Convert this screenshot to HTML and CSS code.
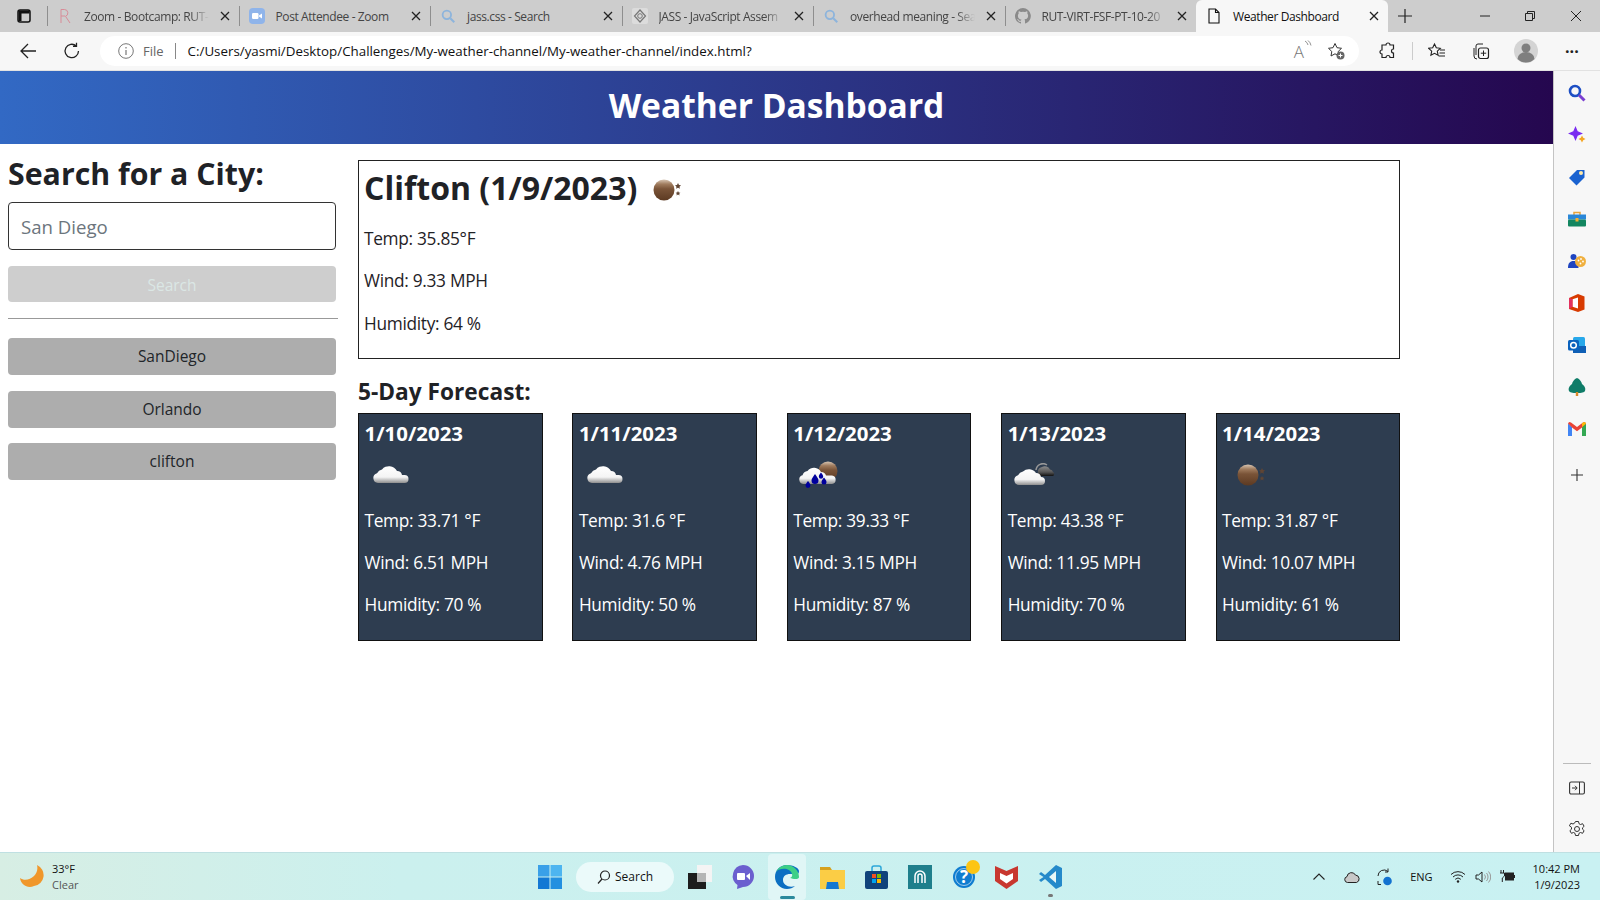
FILE: index.html
```html
<!DOCTYPE html>
<html lang="en">
<head>
    <meta charset="UTF-8">
    <meta name="viewport" content="width=device-width, initial-scale=1.0">
    <title>Weather Dashboard</title>
    <link rel="stylesheet" href="styles.css">
</head>
<body>
<svg class="defs" width="0" height="0">
    <defs>
        <linearGradient id="moonFill" x1="0" y1="0" x2="0" y2="1">
            <stop offset="0" stop-color="#d8c6b4"/>
            <stop offset="0.22" stop-color="#a07c5e"/>
            <stop offset="0.45" stop-color="#7a5438"/>
            <stop offset="1" stop-color="#5c3a22"/>
        </linearGradient>
        <linearGradient id="cloudFill" x1="0" y1="0" x2="0" y2="1">
            <stop offset="0" stop-color="#ffffff"/>
            <stop offset="0.65" stop-color="#f4f4f4"/>
            <stop offset="1" stop-color="#8e8e8e"/>
        </linearGradient>
        <linearGradient id="darkCloud" x1="0" y1="0" x2="0" y2="1">
            <stop offset="0" stop-color="#8c8c8c"/>
            <stop offset="0.6" stop-color="#555"/>
            <stop offset="1" stop-color="#111"/>
        </linearGradient>
        <symbol id="close" viewBox="0 0 10 10">
            <path d="M1 1l8 8M9 1l-8 8" stroke="#222" stroke-width="1.3" fill="none"/>
        </symbol>
        <symbol id="mag" viewBox="0 0 14 14">
            <circle cx="6" cy="6" r="3.7" stroke="#8db4dc" stroke-width="1.6" fill="none"/>
            <path d="M9 9l3.5 3.5" stroke="#8db4dc" stroke-width="1.8"/>
        </symbol>
        <symbol id="moon" viewBox="0 0 30 24">
            <circle cx="11" cy="12" r="10.500" fill="url(#moonFill)"/>
            <path d="M25 5l1 2 2 .3-1.500 1.400.4 2-1.900-1-1.900 1 .4-2L22 7.300l2-.3zM25 13l.8 1.500 1.600.2-1.200 1.100.3 1.600-1.500-.8-1.500.8.3-1.600-1.200-1.100 1.600-.2z" fill="#5f4534"/>
        </symbol>
        <symbol id="cloud" viewBox="0 0 36 20">
            <path d="M5 20a5 5 0 0 1-1-9.800 7 7 0 0 1 5-3.700A9 9 0 0 1 24 8a5 5 0 0 1 5 4h2.500a4 4 0 0 1 0 8z" fill="url(#cloudFill)"/>
        </symbol>
    </defs>
</svg>

<div class="tabbar">
    <button class="tab-toggle">
        <svg width="16" height="16" viewBox="0 0 16 16"><rect x="2" y="2" width="12" height="12" rx="2" fill="none" stroke="#111" stroke-width="1.500"/><path d="M2.500 2.500h11v3h-11zM2.500 5h3v8h-3z" fill="#111"/></svg>
    </button>
    <div class="tab">
        <svg class="tab-icon" viewBox="0 0 16 16"><path d="M4 15V1.500h3.500a3.500 3.500 0 0 1 1 6.800L13 15M4 8h4" fill="none" stroke="#d88b97" stroke-width="1"/></svg>
        <span class="tab-title tab-fade">Zoom - Bootcamp: RUT-</span>
        <svg class="tab-close"><use href="#close"/></svg>
    </div>
    <div class="tab">
        <svg class="tab-icon" viewBox="0 0 16 16"><rect width="16" height="16" rx="4" fill="#8fb4ea"/><rect x="3" y="5" width="6.500" height="6" rx="1.200" fill="#fff"/><path d="M10 7.500l3-2v5l-3-2z" fill="#fff"/></svg>
        <span class="tab-title">Post Attendee - Zoom</span>
        <svg class="tab-close"><use href="#close"/></svg>
    </div>
    <div class="tab">
        <svg class="tab-icon"><use href="#mag"/></svg>
        <span class="tab-title">jass.css - Search</span>
        <svg class="tab-close"><use href="#close"/></svg>
    </div>
    <div class="tab">
        <svg class="tab-icon" viewBox="0 0 16 16"><rect width="16" height="16" rx="2" fill="#dcdcdc"/><path d="M8 2l5.500 6L8 14 2.500 8z" fill="none" stroke="#777" stroke-width="1.200"/><circle cx="8" cy="8" r="2.300" fill="none" stroke="#777"/></svg>
        <span class="tab-title tab-fade">JASS - JavaScript Assem</span>
        <svg class="tab-close"><use href="#close"/></svg>
    </div>
    <div class="tab">
        <svg class="tab-icon"><use href="#mag"/></svg>
        <span class="tab-title tab-fade">overhead meaning - Sea</span>
        <svg class="tab-close"><use href="#close"/></svg>
    </div>
    <div class="tab">
        <svg class="tab-icon" viewBox="0 0 16 16"><path d="M8 0a8 8 0 0 0-2.500 15.600c.4.100.5-.2.500-.4v-1.400c-2.200.5-2.700-1-2.700-1-.4-.9-.9-1.200-.9-1.200-.7-.5.100-.5.100-.5.800.1 1.200.8 1.200.8.700 1.200 1.900.9 2.300.7.100-.5.300-.9.500-1.100-1.800-.2-3.600-.9-3.600-4 0-.9.300-1.600.8-2.100-.1-.2-.4-1 .1-2.100 0 0 .7-.2 2.200.8a7.600 7.600 0 0 1 4 0c1.500-1 2.200-.8 2.200-.8.400 1.100.2 1.900.1 2.100.5.600.8 1.300.8 2.100 0 3.100-1.900 3.700-3.700 3.900.3.300.6.800.6 1.500v2.200c0 .2.100.5.600.4A8 8 0 0 0 8 0z" fill="#8a8a8a"/></svg>
        <span class="tab-title tab-fade">RUT-VIRT-FSF-PT-10-20</span>
        <svg class="tab-close"><use href="#close"/></svg>
    </div>
    <div class="tab tab-active">
        <svg class="tab-icon" viewBox="0 0 16 16"><path d="M3 1h6.500L13 4.500V15H3zM9.500 1v3.500H13" fill="none" stroke="#111" stroke-width="1.100"/></svg>
        <span class="tab-title">Weather Dashboard</span>
        <svg class="tab-close"><use href="#close"/></svg>
    </div>
    <div class="new-tab">
        <svg width="16" height="16" viewBox="0 0 16 16"><path d="M8 1v14M1 8h14" stroke="#222" stroke-width="1.200"/></svg>
    </div>
    <div class="window-controls">
        <svg width="10" height="10" viewBox="0 0 10 10"><path d="M0 5h10" stroke="#222"/></svg>
        <svg width="10" height="10" viewBox="0 0 10 10"><path d="M.5 2.500h7v7h-7zM2.500 2.500v-2h7v7h-2" fill="none" stroke="#222"/></svg>
        <svg width="10" height="10" viewBox="0 0 10 10"><path d="M0 0l10 10M10 0L0 10" stroke="#222"/></svg>
    </div>
</div>

<div class="toolbar">
    <div class="nav-btn">
        <svg width="18" height="18" viewBox="0 0 18 18"><path d="M17 9H2M9 2L2 9l7 7" fill="none" stroke="#222" stroke-width="1.300"/></svg>
    </div>
    <div class="nav-btn">
        <svg width="18" height="18" viewBox="0 0 18 18"><path d="M15.500 9a6.700 6.700 0 1 1-2.200-5M13.500 .8V4.300H10" fill="none" stroke="#222" stroke-width="1.300"/></svg>
    </div>
    <div class="address">
        <svg width="16" height="16" viewBox="0 0 16 16"><circle cx="8" cy="8" r="7.300" fill="none" stroke="#777"/><path d="M8 7v5M8 4v1.500" stroke="#777" stroke-width="1.200"/></svg>
        <span class="address-file">File</span>
        <span class="address-sep"></span>
        <span class="address-url">C:/Users/yasmi/Desktop/Challenges/My-weather-channel/My-weather-channel/index.html?</span>
        <span class="address-read">A<svg width="8" height="10" viewBox="0 0 8 10"><path d="M1 1a6 6 0 0 1 3 4M4 .5a8 8 0 0 1 3 5" fill="none" stroke="#777" stroke-width=".8"/></svg></span>
        <svg width="18" height="18" viewBox="0 0 18 18"><path d="M8 1.500l2 4.200 4.500.6-3.300 3.200.8 4.500L8 11.800 4 14l.8-4.500L1.500 6.300 6 5.700z" fill="none" stroke="#333"/><circle cx="13.500" cy="13.500" r="4" fill="#666"/><path d="M13.500 11.500v4M11.500 13.500h4" stroke="#fff"/></svg>
    </div>
    <div class="tool-icons">
        <svg width="18" height="18" viewBox="0 0 18 18"><path d="M7 3a2 2 0 0 1 4 0h3.500v4a2 2 0 0 0 0 4v4.500H11a2 2 0 0 0-4 0H3V12a2 2 0 0 1 0-4V3z" fill="none" stroke="#222" stroke-width="1.200"/></svg>
        <span class="tool-sep"></span>
        <svg width="18" height="18" viewBox="0 0 18 18"><path d="M6.500 2l1.800 3.800 4 .5-3 2.800.8 4.200-3.600-2-3.600 2 .8-4.200-3-2.800 4-.5zM12 8h5M11.500 11h5.500M10.500 14H17" fill="none" stroke="#222" stroke-width="1.100"/></svg>
        <svg class="tool-collections" width="18" height="18" viewBox="0 0 18 18"><path d="M4 13V4a2 2 0 0 1 2-2h5M2 6v8a3 3 0 0 0 3 3" fill="none" stroke="#222"/><rect x="6.500" y="6" width="10" height="10.500" rx="2" fill="none" stroke="#222" stroke-width="1.200"/><path d="M11.500 8.500v5.500M8.800 11.200h5.400" stroke="#222"/></svg>
        <svg class="avatar" width="24" height="24" viewBox="0 0 24 24"><circle cx="12" cy="12" r="12" fill="#d4d4d4"/><circle cx="12" cy="9" r="4.500" fill="#7f7f7f"/><path d="M3.500 20a8.500 7 0 0 1 17 0 12 12 0 0 1-17 0z" fill="#7f7f7f"/></svg>
        <span class="more">···</span>
    </div>
</div>

<div class="viewport">
    <div class="page">
        <header class="page-header">
            <h1>Weather Dashboard</h1>
        </header>
        <div class="page-body">
            <aside class="search-col">
                <h2>Search for a City:</h2>
                <input type="text" class="city-input" placeholder="San Diego">
                <button class="btn-search" disabled>Search</button>
                <hr class="divider">
                <div class="history">
                    <button class="btn-history">SanDiego</button>
                    <button class="btn-history">Orlando</button>
                    <button class="btn-history">clifton</button>
                </div>
            </aside>
            <main class="weather-col">
                <section class="current">
                    <h2 class="current-title">Clifton (1/9/2023) <svg class="current-icon"><use href="#moon"/></svg></h2>
                    <p>Temp: 35.85°F</p>
                    <p>Wind: 9.33 MPH</p>
                    <p>Humidity: 64 %</p>
                </section>
                <h3 class="forecast-title">5-Day Forecast:</h3>
                <div class="forecast">
                    <div class="card">
                        <h4>1/10/2023</h4>
                        <div class="card-icon">
                            <svg class="icon-cloud"><use href="#cloud"/></svg>
                        </div>
                        <p>Temp: 33.71 °F</p>
                        <p>Wind: 6.51 MPH</p>
                        <p>Humidity: 70 %</p>
                    </div>
                    <div class="card">
                        <h4>1/11/2023</h4>
                        <div class="card-icon">
                            <svg class="icon-cloud"><use href="#cloud"/></svg>
                        </div>
                        <p>Temp: 31.6 °F</p>
                        <p>Wind: 4.76 MPH</p>
                        <p>Humidity: 50 %</p>
                    </div>
                    <div class="card">
                        <h4>1/12/2023</h4>
                        <div class="card-icon">
                            <svg class="icon-rain" viewBox="0 0 40 29">
                                <circle cx="29" cy="10" r="9.500" fill="url(#moonFill)"/>
                                <path d="M5 23a4.500 4.500 0 0 1-1.500-8.800 6.500 6.500 0 0 1 5-4.200A8 8 0 0 1 22 11a5 5 0 0 1 5 3.500h6a4.300 4.300 0 0 1 0 8.500z" fill="url(#cloudFill)"/>
                                <path d="M16 13c2 3 3.500 4.500 3.500 6.500a3.500 3.500 0 0 1-7 0c0-2 1.500-3.500 3.500-6.500zM22 11.500c1 1.500 2.200 2.600 2.200 4a2.200 2.200 0 0 1-4.400 0c0-1.400 1.200-2.500 2.200-4zM9 20c1 1.500 2.500 2.800 2.500 4.500a2.500 2.500 0 0 1-5 0C6.500 22.800 8 21.500 9 20zM25 16.500c1 1.500 2.500 2.800 2.500 4.500a2.500 2.500 0 0 1-5 0c0-1.700 1.500-3 2.500-4.500z" fill="#00009c"/>
                            </svg>
                        </div>
                        <p>Temp: 39.33 °F</p>
                        <p>Wind: 3.15 MPH</p>
                        <p>Humidity: 87 %</p>
                    </div>
                    <div class="card">
                        <h4>1/13/2023</h4>
                        <div class="card-icon">
                            <svg class="icon-partly" viewBox="0 0 42 22">
                                <path d="M22 7a7 7 0 0 1 11-5" fill="none" stroke="#999" stroke-width="1.500"/>
                                <path d="M24 13V7a5 5 0 0 1 4-3 6 6 0 0 1 8 2.500 3.300 3.300 0 0 1 3 2.500 2.300 2.300 0 0 1 0 4z" fill="url(#darkCloud)"/>
                                <path d="M5 22a5 5 0 0 1-1-9.800 7 7 0 0 1 5-3.700A8.500 8.500 0 0 1 22 10a5 5 0 0 1 5 4 4 4 0 0 1 0 8z" fill="url(#cloudFill)"/>
                            </svg>
                        </div>
                        <p>Temp: 43.38 °F</p>
                        <p>Wind: 11.95 MPH</p>
                        <p>Humidity: 70 %</p>
                    </div>
                    <div class="card">
                        <h4>1/14/2023</h4>
                        <div class="card-icon">
                            <svg class="icon-moon"><use href="#moon"/></svg>
                        </div>
                        <p>Temp: 31.87 °F</p>
                        <p>Wind: 10.07 MPH</p>
                        <p>Humidity: 61 %</p>
                    </div>
                </div>
            </main>
        </div>
    </div>

    <div class="side-panel">
        <div class="side-icons">
            <svg width="18" height="18" viewBox="0 0 18 18"><circle cx="7" cy="7" r="5" fill="none" stroke="#1d4fc4" stroke-width="2.600"/><path d="M11 11l5.500 5.500" stroke="#7a3fd0" stroke-width="3"/></svg>
            <svg width="18" height="18" viewBox="0 0 18 18"><path d="M7.500 0l2.200 5.300L15 7.500 9.700 9.700 7.500 15 5.300 9.700 0 7.500l5.300-2.200z" fill="#7a2cf0"/><path d="M14 9.500l1.200 2.300 2.300 1.200-2.300 1.200L14 16.500l-1.200-2.300-2.300-1.200 2.300-1.200z" fill="#f5a623"/></svg>
            <svg width="18" height="18" viewBox="0 0 18 18"><path d="M1 10l8-8h7.500v7.500l-8 8z" fill="#1a62d0"/><circle cx="13" cy="5" r="2" fill="#ffe9a8"/></svg>
            <svg width="18" height="18" viewBox="0 0 18 18"><path d="M6 5V2.500h6V5" fill="none" stroke="#e8a33a" stroke-width="1.500"/><rect y="4.500" width="18" height="5" fill="#2a87d8"/><rect y="9.500" width="18" height="7" rx="1" fill="#138660"/><rect x="7.500" y="8" width="3" height="3.500" fill="#f2b134"/></svg>
            <svg width="18" height="18" viewBox="0 0 18 18"><circle cx="5.500" cy="5" r="3" fill="#1f45c0"/><path d="M0 16c0-5 2-7 5.500-7s5 2 5 7z" fill="#1f45c0"/><circle cx="12.500" cy="9.500" r="5.500" fill="#f0b03f"/><circle cx="10.500" cy="8.500" r=".9" fill="#fff"/><circle cx="13" cy="7" r=".9" fill="#fff"/><circle cx="15" cy="9.500" r=".9" fill="#fff"/><circle cx="12.500" cy="11.500" r=".9" fill="#fff"/></svg>
            <svg width="18" height="18" viewBox="0 0 18 18"><path d="M1 4l9-4 6.500 2.500v13L10 18l-9-3z" fill="#d83b01"/><path d="M10 3.500L4.500 5.200v7.600L10 14.500z" fill="#fff"/><path d="M1 4l3.500 1.200v7.600L1 15z" fill="#e3305f"/></svg>
            <svg width="18" height="18" viewBox="0 0 18 18"><rect x="5" y="1" width="12" height="16" rx="1.500" fill="#28a8ea"/><rect x="5" y="10" width="13" height="7" fill="#0f5fb5"/><rect y="4" width="11" height="10.500" rx="1.500" fill="#0a62bd"/><circle cx="5.500" cy="9.200" r="2.800" fill="none" stroke="#fff" stroke-width="1.500"/></svg>
            <svg width="18" height="18" viewBox="0 0 18 18"><path d="M9 0c3 1 4.500 4 5 6 2.500 1.500 4 4.500 3 7-1 1.500-3 2-8 2s-7-.5-8-2c-1-2.500.5-5.500 3-7 .5-2 2-5 5-6z" fill="#0f7c68"/><rect x="7.800" y="14" width="2.400" height="4" fill="#d8892a"/></svg>
            <svg width="18" height="18" viewBox="0 0 18 18"><path d="M0 3.500v12.500h4V7z" fill="#4285f4"/><path d="M14 7v9h4V3.500z" fill="#34a853"/><path d="M0 3.500a2 2 0 0 1 3-1L9 7l6-4.500a2 2 0 0 1 3 1l-4 4-5 3.700-5-3.700z" fill="#ea4335"/><path d="M14 3.500V7l4-3.500a2 2 0 0 0-3-1z" fill="#fbbc04"/></svg>
            <svg class="side-plus" width="14" height="14" viewBox="0 0 14 14"><path d="M7 1v12M1 7h12" stroke="#333" stroke-width="1.100"/></svg>
        </div>
        <div class="side-bottom">
            <span class="side-rule"></span>
            <svg width="16" height="14" viewBox="0 0 16 14"><rect x=".6" y="1" width="14.800" height="12" rx="1.500" fill="none" stroke="#333" stroke-width="1.100"/><path d="M10.500 1v12M3 7h5M6 4.800L8.200 7 6 9.200" fill="none" stroke="#333"/></svg>
            <svg width="18" height="18" viewBox="0 0 18 18"><circle cx="9" cy="9" r="2.500" fill="none" stroke="#333"/><path d="M7.500 1.500h3l.5 2.200 1.500.8 2.100-.8 1.500 2.600-1.600 1.500v1.400l1.600 1.500-1.500 2.600-2.100-.8-1.500.8-.5 2.200h-3l-.5-2.200-1.500-.8-2.100.8-1.500-2.600 1.600-1.500V7.300L1.400 5.800l1.500-2.600 2.100.8 1.500-.8z" fill="none" stroke="#333"/></svg>
        </div>
    </div>
</div>

<footer class="taskbar">
    <div class="tb-weather">
        <svg width="24" height="23" viewBox="0 0 24 23"><path d="M17 0a11 11 0 0 1-3 21C8 24 1 20 0 13c4 3 10 2 14-2 3-3 4-7 3-11z" fill="#f0972b"/></svg>
        <div class="tb-weather-text">
            <span>33°F</span>
            <span class="tb-muted">Clear</span>
        </div>
    </div>
    <div class="tb-center">
        <svg width="24" height="24" viewBox="0 0 24 24"><path d="M0 0h11.500v11.500H0z" fill="#3aa0e8"/><path d="M12.500 0H24v11.500H12.500z" fill="#4db5f0"/><path d="M0 12.500h11.500V24H0z" fill="#1378d4"/><path d="M12.500 12.500H24V24H12.500z" fill="#2390e0"/></svg>
        <div class="tb-search">
            <svg width="14" height="14" viewBox="0 0 14 14"><circle cx="8" cy="5.500" r="4.500" fill="none" stroke="#222" stroke-width="1.200"/><path d="M5 9l-4 4.500" stroke="#222" stroke-width="1.200"/></svg>
            <span>Search</span>
        </div>
        <svg width="24" height="24" viewBox="0 0 24 24"><rect x="9" width="15" height="17" fill="#f4f4f4"/><rect y="8" width="18" height="16" fill="#1d1d1d"/><rect x="9" y="8" width="9" height="9" fill="#b5b5b5"/></svg>
        <svg class="tb-chat" width="24" height="24" viewBox="0 0 24 24"><path d="M12 0a11 11 0 0 1 0 22l-6 2 .5-4A11 11 0 0 1 12 0z" fill="#6b5fcf"/><rect x="6" y="8" width="8" height="7" rx="1" fill="#fff"/><path d="M15 11l4-3v7z" fill="#fff"/></svg>
        <div class="tb-active">
            <svg width="24" height="24" viewBox="0 0 24 24"><path d="M12 0C5 0 0 5 0 12c0 6 5 12 12 12 3 0 6-1 8-3-6 2-12-1-12-6 0-4 3-6 7-6 5 0 9 2 9-3C24 3 18 0 12 0z" fill="#0b6fc2"/><path d="M24 12c0-7-6-12-12-12C7 0 3 3 1 7c3-4 14-5 16 2 1 3-2 4-2 4 3 1 9 2 9-1z" fill="#3dcf86"/></svg>
            <span class="tb-indicator"></span>
        </div>
        <svg width="25" height="24" viewBox="0 0 25 24"><path d="M0 2h10l2 3h-12z" fill="#d6a01d"/><path d="M0 5h25v19H0z" fill="#fbcd45"/><path d="M7 17h11l1 7H6z" fill="#1478d2"/></svg>
        <svg width="23" height="24" viewBox="0 0 23 24"><path d="M7 6V3a2 2 0 0 1 2-2h5a2 2 0 0 1 2 2v3" fill="none" stroke="#2ba6d9" stroke-width="1.500"/><rect y="6" width="23" height="18" rx="2" fill="#10437b"/><rect x="7" y="9" width="4" height="4" fill="#f25022"/><rect x="12" y="9" width="4" height="4" fill="#7fba00"/><rect x="7" y="14" width="4" height="4" fill="#00a4ef"/><rect x="12" y="14" width="4" height="4" fill="#ffb900"/></svg>
        <svg class="tb-app" width="24" height="24" viewBox="0 0 24 24"><rect width="24" height="24" fill="#1f7f8c"/><path d="M7 18V11a5 5 0 0 1 10 0v7M10 18v-7a2 2 0 0 1 4 0v7" fill="none" stroke="#fff" stroke-width="1.500"/></svg>
        <div class="tb-help">
            <svg width="28" height="29" viewBox="0 0 28 29"><circle cx="12" cy="17" r="11" fill="#0f7dd0"/><circle cx="12" cy="17" r="8.500" fill="none" stroke="#fff" stroke-width=".6"/><text x="12" y="23" text-anchor="middle" class="tb-help-mark">?</text><circle cx="21" cy="7" r="7" fill="#fdc514"/></svg>
        </div>
        <svg width="23" height="24" viewBox="0 0 23 24"><path d="M0 1l11.500 5L23 1v15l-11.500 8L0 16z" fill="#c8372f"/><path d="M5 8l6.500 3L18 8v6l-6.500 4.500L5 14z" fill="#fff"/></svg>
        <div class="tb-vscode">
            <svg width="23" height="24" viewBox="0 0 23 24"><path d="M17 0l6 3v18l-6 3L6 14l-4 3-2-2 4.500-3L0 9l2-2 4 3z" fill="#2489ca"/><path d="M17 6l-7 6 7 6z" fill="#e8f6f6"/></svg>
            <span class="tb-dot"></span>
        </div>
    </div>
    <div class="tb-tray">
        <svg class="tray-chevron" width="12" height="7" viewBox="0 0 12 7"><path d="M.5 6.500L6 1l5.500 5.500" fill="none" stroke="#222" stroke-width="1.100"/></svg>
        <svg class="tray-cloud" width="16" height="12" viewBox="0 0 16 12"><path d="M3.500 11.500a3 3 0 0 1-.5-5.900 4.500 4.500 0 0 1 8.500-1.500 3.800 3.800 0 0 1 1 7.400z" fill="#c8c8c8" stroke="#222"/></svg>
        <svg class="tray-sync" width="16" height="18" viewBox="0 0 16 18"><path d="M2 8a6 6 0 0 1 10-4.500M12 .5v3.500H9M2 13v3.500h3" fill="none" stroke="#222"/><circle cx="11.500" cy="13" r="4.300" fill="#1272d0"/></svg>
        <span class="tb-lang">ENG</span>
        <svg class="tray-wifi" width="16" height="13" viewBox="0 0 16 13"><path d="M1 4.500a10 10 0 0 1 14 0M3 7a7 7 0 0 1 10 0M5.200 9.300a4 4 0 0 1 5.600 0" fill="none" stroke="#222"/><circle cx="8" cy="11.500" r="1.200" fill="#222"/></svg>
        <svg class="tray-sound" width="16" height="14" viewBox="0 0 16 14"><path d="M1 5h2.500L7 2v10L3.500 9H1z" fill="none" stroke="#222"/><path d="M9.500 4.500a4 4 0 0 1 0 5M11.500 3a6 6 0 0 1 0 8M13.500 1.500a8 8 0 0 1 0 11" fill="none" stroke="#999"/></svg>
        <svg class="tray-battery" width="15" height="13" viewBox="0 0 15 13"><path d="M1 0v3M3.500 0v3M0 3h4.500v3L2.300 8v4" fill="none" stroke="#222"/><rect x="5" y="2.500" width="9" height="8" fill="#222"/><rect x="14" y="5" width="1" height="3" fill="#222"/></svg>
        <div class="tb-clock">
            <span>10:42 PM</span>
            <span>1/9/2023</span>
        </div>
    </div>
</footer>
</body>
</html>
```

FILE: styles.css
```css
* {
    box-sizing: border-box;
}

body {
    font-family: 'Open Sans', 'Noto Sans', sans-serif;
    color: #1f2226;
    background-color: #fff;
    margin: 0;
    width: 1600px;
    height: 900px;
    overflow: hidden;
    display: flex;
    flex-direction: column;
}

.defs {
    position: absolute;
}

/* browser chrome */
.tabbar {
    height: 32px;
    background-color: #cdcdcd;
    display: flex;
    align-items: center;
    font-size: 12px;
    color: #444;
    flex-shrink: 0;
}

.tab-toggle {
    width: 47px;
    height: 32px;
    background: none;
    border: none;
    padding: 0;
    display: flex;
    align-items: center;
    justify-content: center;
}

.tab {
    width: 191.500px;
    height: 32px;
    padding: 0 9px 0 10px;
    display: flex;
    align-items: center;
    gap: 11px;
    background-image: linear-gradient(#8e8e8e, #8e8e8e);
    background-size: 1px 20px;
    background-position: left center;
    background-repeat: no-repeat;
}

.tab-icon {
    width: 16px;
    height: 16px;
    flex-shrink: 0;
}

.tab-title {
    flex: 1;
    min-width: 0;
    white-space: nowrap;
    letter-spacing: -0.4px;
}

.tab-fade {
    -webkit-mask-image: linear-gradient(to right, #000 85%, transparent);
    mask-image: linear-gradient(to right, #000 85%, transparent);
}

.tab-close {
    width: 10px;
    height: 10px;
    flex-shrink: 0;
}

.tab-active {
    background-color: #f7f7f7;
    background-image: none;
    border-radius: 6px 6px 0 0;
    color: #111;
}

.new-tab {
    width: 34px;
    display: flex;
    justify-content: center;
}

.window-controls {
    flex: 1;
    display: flex;
    justify-content: space-between;
    align-items: center;
    padding: 0 19px 0 58px;
}

.toolbar {
    height: 39px;
    background-color: #f7f7f7;
    display: flex;
    align-items: center;
    flex-shrink: 0;
    padding-left: 6px;
    border-bottom: 1px solid #e2e2e2;
}

.nav-btn {
    width: 44px;
    display: flex;
    justify-content: center;
}

.address {
    width: 1259px;
    height: 30px;
    margin-left: 6px;
    padding: 0 14px 0 18px;
    background-color: #fff;
    border-radius: 15px;
    display: flex;
    align-items: center;
    font-size: 13.350px;
    color: #111;
}

.address-file {
    margin-left: 9px;
    color: #666;
    font-size: 13px;
}

.address-sep {
    width: 1px;
    height: 16px;
    background-color: #888;
    margin: 0 12px 0 11px;
}

.address-url {
    flex: 1;
}

.address-read {
    color: #777;
    font-size: 17px;
    font-weight: 300;
    margin-right: 15px;
    display: flex;
    align-items: flex-start;
}

.tool-icons {
    flex: 1;
    display: flex;
    align-items: center;
    padding-left: 20px;
}

.tool-icons svg {
    flex-shrink: 0;
}

.tool-sep {
    width: 1px;
    height: 18px;
    background-color: #ccc;
    margin: 0 15px 0 15px;
}

.tool-collections {
    margin-left: 26px;
}

.avatar {
    margin-left: 24px;
}

.more {
    margin-left: 27px;
    font-size: 16px;
    font-weight: bold;
    color: #222;
}

.viewport {
    flex: 1;
    display: flex;
    min-height: 0;
}

/* the page itself */
.page {
    width: 1553px;
    flex-shrink: 0;
}

.page-header {
    height: 73px;
    padding-bottom: 6px;
    background: linear-gradient(to right, #3269c4, #25074f);
    display: flex;
    align-items: center;
    justify-content: center;
}

.page-header h1 {
    margin: 0;
    color: #fff;
    font-size: 33.600px;
    font-weight: 700;
}

.page-body {
    display: flex;
    padding: 0 8px;
    gap: 22px;
}

.search-col {
    width: 328px;
    flex-shrink: 0;
}

.search-col h2 {
    margin: 9px 0 0;
    font-size: 30.300px;
    line-height: 42px;
    font-weight: 700;
    white-space: nowrap;
}

.city-input {
    display: block;
    width: 100%;
    height: 48px;
    margin-top: 7px;
    padding: 0 12px;
    border: 1px solid #333;
    border-radius: 4px;
    font-family: inherit;
    font-size: 18.600px;
}

.city-input::placeholder {
    color: #6c757d;
}

.btn-search {
    display: block;
    width: 100%;
    height: 36px;
    margin-top: 16px;
    padding-top: 2px;
    background-color: #cecece;
    color: #dbe7e5;
    border: none;
    border-radius: 4px;
    font-family: inherit;
    font-size: 15.500px;
}

.divider {
    width: 330px;
    margin: 16px 0 0;
    border: none;
    border-top: 1px solid #999;
}

.history {
    margin-top: 19px;
    display: flex;
    flex-direction: column;
    gap: 15.500px;
}

.btn-history {
    height: 37px;
    padding-bottom: 2px;
    background-color: #adadad;
    color: #212529;
    border: none;
    border-radius: 4px;
    font-family: inherit;
    font-size: 15.500px;
}

.weather-col {
    width: 1042px;
    padding-top: 16px;
}

.current {
    height: 199px;
    border: 1px solid #222;
    padding: 4px 5px;
}

.current-title {
    margin: 0 0 14px;
    font-size: 32px;
    line-height: 46px;
    font-weight: 700;
    display: flex;
    align-items: center;
    gap: 16px;
}

.current-icon {
    width: 30px;
    height: 24px;
    margin-top: 3px;
}

p {
    margin: 0 0 15.300px;
    font-size: 17.300px;
    line-height: 27px;
    letter-spacing: -0.3px;
}

.forecast-title {
    margin: 14px 0 2px;
    font-size: 22.700px;
    line-height: 38px;
    font-weight: 700;
}

.forecast {
    display: flex;
    justify-content: space-between;
}

.card {
    width: 184.500px;
    height: 228px;
    background-color: #2e3d50;
    border: 1px solid #111;
    color: #fff;
    padding: 6px 5.500px;
}

.card h4 {
    margin: 0;
    font-size: 20.400px;
    line-height: 27px;
    font-weight: 700;
}

.card p {
    margin-bottom: 15px;
}

.card-icon {
    height: 50px;
    margin-top: 8px;
    margin-bottom: 2px;
    display: flex;
    align-items: flex-start;
}

.icon-cloud {
    width: 36px;
    height: 20px;
    margin: 8px 0 0 8px;
}

.icon-rain {
    width: 40px;
    height: 29px;
    margin: 6px 0 0 6px;
}

.icon-partly {
    width: 42px;
    height: 22px;
    margin: 8px 0 0 6px;
}

.icon-moon {
    width: 30px;
    height: 24px;
    margin: 8px 0 0 15px;
}

/* edge sidebar */
.side-panel {
    flex: 1;
    background-color: #f7f7f7;
    border-left: 1px solid #c4c4c4;
    display: flex;
    flex-direction: column;
    justify-content: space-between;
    align-items: center;
}

.side-icons {
    display: flex;
    flex-direction: column;
    align-items: center;
    gap: 24px;
    padding-top: 13px;
}

.side-plus {
    margin-top: 6px;
}

.side-bottom {
    display: flex;
    flex-direction: column;
    align-items: center;
    padding-bottom: 14px;
}

.side-rule {
    width: 28px;
    height: 1px;
    background-color: #bbb;
    margin-bottom: 17px;
}

.side-bottom svg + svg {
    margin-top: 25px;
}

/* windows taskbar */
.taskbar {
    height: 48px;
    flex-shrink: 0;
    display: flex;
    align-items: center;
    background: linear-gradient(to right, #d7eee4, #cbf0ee 25%, #c9f1f2);
    border-top: 1px solid #bfe0e2;
    font-size: 12px;
    color: #111;
}

.tb-weather {
    display: flex;
    align-items: center;
    gap: 8px;
    padding-left: 20px;
    width: 538px;
    flex-shrink: 0;
}

.tb-weather-text {
    display: flex;
    flex-direction: column;
    font-size: 11px;
    line-height: 16px;
}

.tb-muted {
    color: #555;
}

.tb-center {
    display: flex;
    align-items: center;
    gap: 20px;
}

.tb-search {
    width: 98px;
    height: 30px;
    margin-left: -6px;
    margin-right: -6px;
    background-color: #ebfafa;
    border-radius: 15px;
    display: flex;
    align-items: center;
    justify-content: center;
    gap: 4px;
}

.tb-chat {
    margin-left: -1px;
}

.tb-active {
    position: relative;
    display: flex;
    background-color: #e0f6f6;
    margin: 0 -6px 0 -7px;
    padding: 11px 7px;
    border-radius: 4px;
    height: 46px;
}

.tb-indicator {
    position: absolute;
    left: 12px;
    bottom: 1px;
    width: 15px;
    height: 3px;
    border-radius: 2px;
    background-color: #2c8a9c;
}

.tb-app {
    margin-left: 0;
}

.tb-help {
    display: flex;
    margin-top: -4px;
    margin-right: -5px;
}

.tb-help-mark {
    font-size: 17px;
    font-weight: 700;
    fill: #fff;
}

.tb-vscode {
    position: relative;
    display: flex;
    margin-left: 1px;
}

.tb-dot {
    position: absolute;
    left: 9px;
    bottom: -8px;
    width: 5px;
    height: 3px;
    border-radius: 2px;
    background-color: #777;
}

.tb-tray {
    margin-left: auto;
    display: flex;
    align-items: center;
    padding-right: 20px;
}

.tray-cloud {
    margin-left: 19px;
}

.tray-sync {
    margin-left: 16px;
}

.tb-lang {
    font-size: 11px;
    margin-left: 18px;
}

.tray-wifi {
    margin-left: 17px;
}

.tray-sound {
    margin-left: 9px;
}

.tray-battery {
    margin-left: 9px;
}

.tb-clock {
    display: flex;
    flex-direction: column;
    align-items: flex-end;
    font-size: 11px;
    line-height: 16px;
    margin-left: 18px;
}
```
